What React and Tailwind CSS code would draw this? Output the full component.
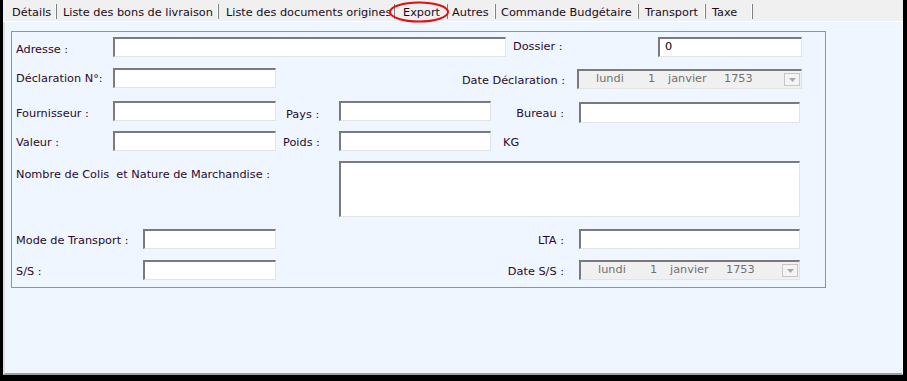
import React from "react";

const font = { fontFamily: '"DejaVu Sans", Verdana, sans-serif' };

function Input({ w, h = "h-[20px]", cls = "", children }) {
  return (
    <div
      className={`${w} ${h} ${cls} shrink-0 bg-white border-t-2 border-l-2 border-r border-b border-t-[#7a7a7a] border-l-[#7a7a7a] border-r-[#e3e3e3] border-b-[#e3e3e3] flex items-center pl-[3px] text-[11.3px] text-black`}
    >
      {children}
    </div>
  );
}

function DateSelect({ w, cls = "" }) {
  return (
    <div
      className={`${w} ${cls} shrink-0 h-[20px] bg-[#f0f0f0] border-t-2 border-l-2 border-r border-b border-t-[#7a7a7a] border-l-[#7a7a7a] border-r-[#e3e3e3] border-b-[#e3e3e3] flex items-center text-[11.3px] text-[#707070]`}
    >
      <span className="ml-[17px] w-[52px]">lundi</span>
      <span className="w-[20px]">1</span>
      <span className="w-[56px]">janvier</span>
      <span>1753</span>
      <div className="ml-auto mr-[1px] w-[16px] h-[13px] border border-[#c6c6c6] bg-[#f4f4f4] flex items-center justify-center">
        <svg width="7" height="4" viewBox="0 0 7 4">
          <polygon points="0,0 7,0 3.5,4" fill="#a8a8a8" />
        </svg>
      </div>
    </div>
  );
}

function Tab({ w, pl, children }) {
  return (
    <div className="flex h-full items-stretch">
      <div className={`${w} ${pl} pt-[6px] leading-[13px] whitespace-nowrap text-[11.3px] text-[#1a0a1a]`}>{children}</div>
      <div className="w-[2px] mt-[4px] mb-[1px] border-l border-l-white border-r border-r-[#808080]" />
    </div>
  );
}

const L = "shrink-0 text-[11.3px] leading-[13px] text-[#2a0a2a] whitespace-nowrap";
const R = "flex items-start h-[20px]";

export default function App() {
  return (
    <div className="w-[907px] h-[381px] bg-black overflow-hidden" style={font}>
      <div className="ml-[3px] mr-[4px] h-[375px] flex flex-col relative">
        {/* tab strip */}
        <div className="h-[22px] bg-[#f0f0f0] flex items-stretch border-b border-b-white pb-[1px]">
          <Tab w="w-[52px]" pl="pl-[9px]">Détails</Tab>
          <Tab w="w-[160px]" pl="pl-[6px]">Liste des bons de livraison</Tab>
          <Tab w="w-[174px]" pl="pl-[7px]">Liste des documents origines</Tab>
          <Tab w="w-[51px]" pl="pl-[8px]">Export</Tab>
          <Tab w="w-[46px]" pl="pl-[4px]">Autres</Tab>
          <Tab w="w-[141px]" pl="pl-[5px]">Commande Budgétaire</Tab>
          <Tab w="w-[65px]" pl="pl-[6px]">Transport</Tab>
          <Tab w="w-[45px]" pl="pl-[6px]">Taxe</Tab>
        </div>
        <svg className="absolute left-[385px] top-[1px]" width="62" height="22" viewBox="0 0 62 22">
          <ellipse cx="31" cy="11" rx="29" ry="9.5" fill="none" stroke="#e01010" strokeWidth="2" />
        </svg>

        {/* content */}
        <div className="flex-1 bg-[#eff6ff] border-l-2 border-l-[#dedede] border-b-2 border-b-[#a0a0a0] border-r border-r-white">
          <div className="ml-[6px] mt-[9px] w-[815px] h-[257px] border border-[#5b9fe6] pl-[4px] pt-[5px]">
            {/* Row 1 */}
            <div className={R}>
              <div className={`${L} w-[97px] pt-[6px]`}>Adresse :</div>
              <Input w="w-[393px]" />
              <div className={`${L} ml-[7px] w-[145px] pt-[3px]`}>Dossier :</div>
              <Input w="w-[144px]">
                <span className="pl-[2px]">0</span>
              </Input>
            </div>
            {/* Row 2 */}
            <div className={`${R} mt-[11px]`}>
              <div className={`${L} w-[97px] pt-[4px]`}>Déclaration N°:</div>
              <Input w="w-[163px]" />
              <div className={`${L} w-[301px] text-right pr-[12px] pt-[6px]`}>Date Déclaration :</div>
              <DateSelect w="w-[225px]" cls="mt-[1px]" />
            </div>
            {/* Row 3 */}
            <div className={`${R} mt-[13px]`}>
              <div className={`${L} w-[97px] pt-[6px]`}>Fournisseur :</div>
              <Input w="w-[163px]" />
              <div className={`${L} w-[63px] pl-[10px] pt-[7px]`}>Pays :</div>
              <Input w="w-[152px]" />
              <div className={`${L} w-[88px] text-right pr-[15px] pt-[6px]`}>Bureau :</div>
              <Input w="w-[221px]" h="h-[21px]" cls="mt-[1px]" />
            </div>
            {/* Row 4 */}
            <div className={`${R} mt-[10px]`}>
              <div className={`${L} w-[97px] pt-[5px]`}>Valeur :</div>
              <Input w="w-[163px]" />
              <div className={`${L} w-[63px] pl-[7px] pt-[5px]`}>Poids :</div>
              <Input w="w-[152px]" />
              <div className={`${L} ml-[12px] pt-[5px]`}>KG</div>
            </div>
            {/* Row 5 */}
            <div className="flex items-start h-[56px] mt-[10px]">
              <div className={`${L} w-[323px] pt-[7px]`}>Nombre de Colis&nbsp; et Nature de Marchandise :</div>
              <Input w="w-[461px]" h="h-[56px]" />
            </div>
            {/* Row 6 */}
            <div className={`${R} mt-[12px]`}>
              <div className={`${L} w-[127px] pt-[5px]`}>Mode de Transport :</div>
              <Input w="w-[133px]" />
              <div className={`${L} w-[303px] text-right pr-[15px] pt-[5px]`}>LTA :</div>
              <Input w="w-[221px]" />
            </div>
            {/* Row 7 */}
            <div className={`${R} mt-[11px]`}>
              <div className={`${L} w-[127px] pt-[5px]`}>S/S :</div>
              <Input w="w-[133px]" />
              <div className={`${L} w-[303px] text-right pr-[15px] pt-[5px]`}>Date S/S :</div>
              <DateSelect w="w-[221px]" />
            </div>
          </div>
        </div>
      </div>
    </div>
  );
}
